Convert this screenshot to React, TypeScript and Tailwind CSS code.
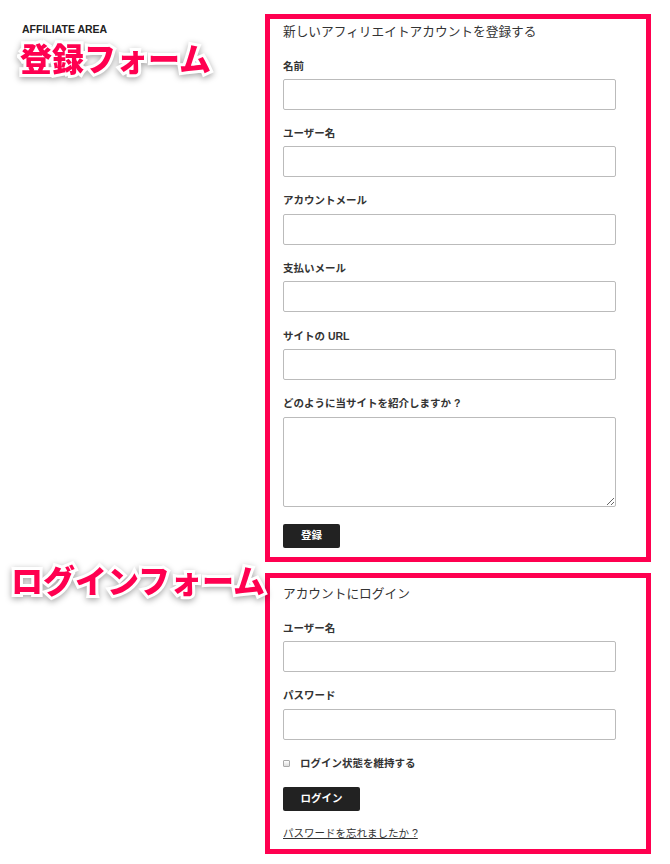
import React from "react";

const jp = "font-['Helvetica_Neue','Liberation_Sans','Noto_Sans_CJK_JP',sans-serif]";

const bigTitle =
  "font-['Noto_Sans_CJK_JP',sans-serif] text-[32px] leading-[32px] font-black text-[#ff0050] [-webkit-text-stroke:6px_#fff] [paint-order:stroke_fill] drop-shadow-[0_2px_3px_rgba(0,0,0,0.35)] whitespace-nowrap";

function Field({ label, tall, gap, mb }: { label: string; tall?: boolean; gap: string; mb: string }) {
  return (
    <div className={mb}>
      <label className={`block text-[10.5px] leading-[14px] font-bold text-[#333] ${gap}`}>{label}</label>
      {tall ? (
        <textarea className="block w-[333px] h-[90px] border border-[#bbb] rounded-[2px] bg-white" />
      ) : (
        <input type="text" className="block w-[333px] h-[31px] border border-[#bbb] rounded-[2px] bg-white" />
      )}
    </div>
  );
}

function RegisterBox() {
  return (
    <div className="border-[5px] border-[#ff0050] pl-[13px] pr-[30px] pt-[4px] pb-[9px]">
      <h3 className="text-[12.7px] leading-[18px] text-[#333] mb-[18px]">新しいアフィリエイトアカウントを登録する</h3>
      <Field label="名前" gap="mb-[6px]" mb="mb-[16px]" />
      <Field label="ユーザー名" gap="mb-[6px]" mb="mb-[16px]" />
      <Field label="アカウントメール" gap="mb-[7px]" mb="mb-[16px]" />
      <Field label="支払いメール" gap="mb-[6px]" mb="mb-[17px]" />
      <Field label="サイトの URL" gap="mb-[6px]" mb="mb-[16px]" />
      <Field label="どのように当サイトを紹介しますか ?" tall gap="mb-[7px]" mb="mb-[17px]" />
      <button className="block w-[57px] h-[24px] bg-[#222] rounded-[2px] text-white text-[10.5px] font-bold">登録</button>
    </div>
  );
}

function LoginBox() {
  return (
    <div className="border-[5px] border-[#ff0050] pl-[13px] pr-[30px] pt-[7px] pb-[9px]">
      <h3 className="text-[12.7px] leading-[18px] text-[#333] mb-[18px]">アカウントにログイン</h3>
      <Field label="ユーザー名" gap="mb-[6px]" mb="mb-[16px]" />
      <Field label="パスワード" gap="mb-[7px]" mb="mb-[16px]" />
      <div className="flex items-center h-[14px] mb-[17px]">
        <span className="w-[7px] h-[7px] border border-[#aaa] rounded-[1px] bg-gradient-to-b from-[#fff] to-[#ddd] mr-[10px]" />
        <span className="text-[10.5px] leading-[14px] font-bold text-[#333]">ログイン状態を維持する</span>
      </div>
      <button className="block w-[77px] h-[24px] bg-[#222] rounded-[2px] text-white text-[10.5px] font-bold mb-[15px]">ログイン</button>
      <a className="block text-[10.5px] leading-[14px] text-[#333] underline">パスワードを忘れましたか ?</a>
    </div>
  );
}

export default function App() {
  return (
    <div className={`relative w-[670px] h-[864px] bg-white flex ${jp}`}>
      <div className="w-[265px] pl-[20px] pt-[23px]">
        <p className="text-[10.5px] leading-[12px] font-bold text-[#222] pl-[2px] font-['Liberation_Sans',sans-serif]">AFFILIATE AREA</p>
        <div className={`${bigTitle} mt-[6px]`}>登録フォーム</div>
      </div>
      <div className="w-[386px] pt-[14px] flex flex-col gap-[11px]">
        <RegisterBox />
        <LoginBox />
      </div>
      <div className={`absolute left-[11px] top-[563px] ${bigTitle}`}>ログインフォーム</div>
    </div>
  );
}
